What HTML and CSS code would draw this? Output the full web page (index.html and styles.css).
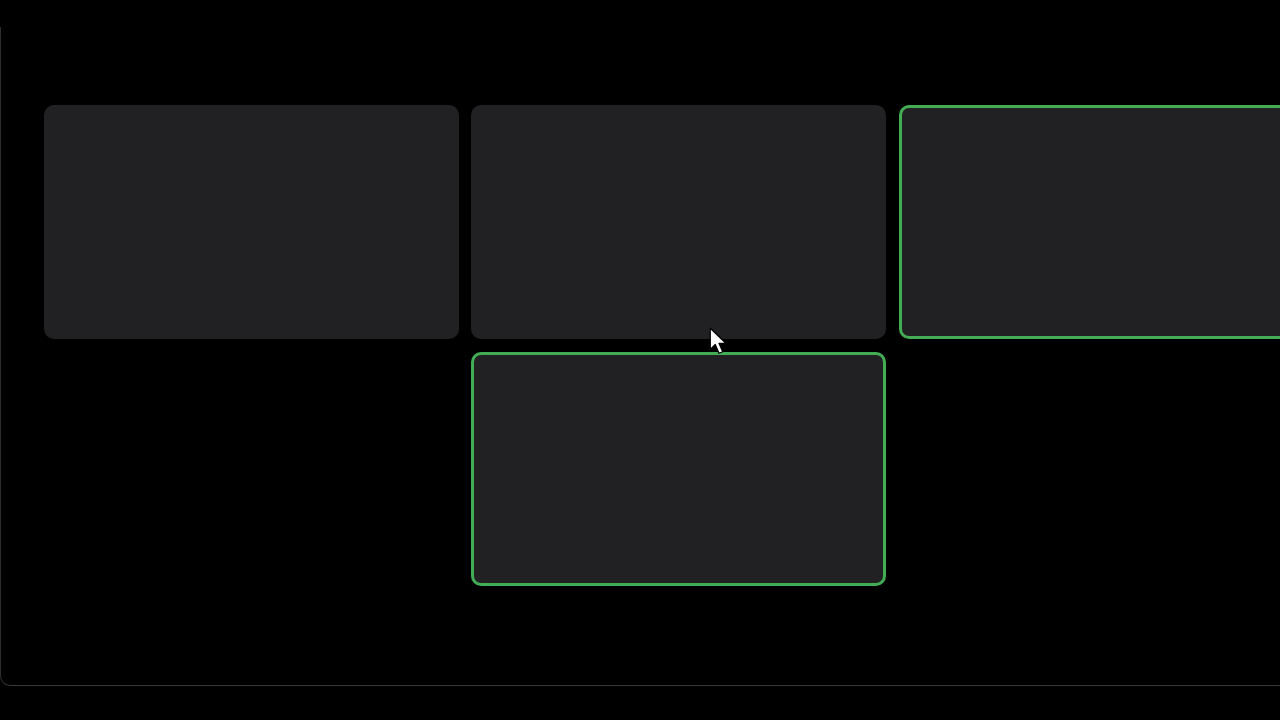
FILE: index.html
```html
<!DOCTYPE html>
<html>
<head>
<meta charset="utf-8">
<link rel="stylesheet" href="styles.css">
</head>
<body>
<div class="frame">
  <div class="grid">
    <div class="card"></div>
    <div class="card"></div>
    <div class="card selected"></div>
    <div class="card empty"></div>
    <div class="card selected"></div>
  </div>
</div>
<svg class="cursor" width="20" height="30" viewBox="0 0 16 24">
  <path d="M1 1 L1 18 L5 14 L8 21 L11 19.8 L8 13 L13.5 13 Z" fill="#fff" stroke="#000" stroke-width="1" stroke-linejoin="round"/>
</svg>
</body>
</html>
```
FILE: styles.css
```css
html, body {
  margin: 0;
  padding: 0;
  background: #000;
  width: 1280px;
  height: 720px;
  overflow: hidden;
  font-family: "Liberation Sans", sans-serif;
}
.frame {
  margin-top: 27px;
  height: 659px;
  width: 1280px;
  overflow: hidden;
  border-left: 1px solid #2e2e30;
  border-bottom: 1px solid #3a3a3c;
  border-bottom-left-radius: 10px;
  box-sizing: border-box;
  padding: 78px 0 0 43px;
}
.grid {
  display: grid;
  grid-template-columns: 415px 415px 415px;
  grid-auto-rows: 234px;
  gap: 13px 12px;
}
.card {
  background: #212123;
  border-radius: 10px;
  box-sizing: border-box;
}
.card.empty {
  background: transparent;
}
.card.selected {
  border: 3px solid #43ad55;
  margin-left: 1px;
}
.grid .card.selected:last-child {
  margin-left: 0;
}
.cursor {
  position: absolute;
  left: 709px;
  top: 327px;
}
```
